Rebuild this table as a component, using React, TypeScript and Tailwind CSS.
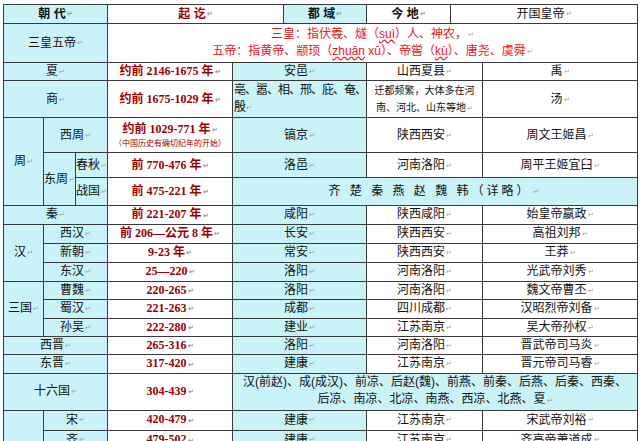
import type { ReactNode, TdHTMLAttributes } from 'react';

// light cyan used by Word for the 朝代 / 都域 columns
const cyan = 'bg-[#c9f3f8]';

// small grey paragraph mark that Word shows after each cell's text
function Mark() {
  return <span className="ml-[1px] align-middle text-[7px] text-[#a0a0a0]">↵</span>;
}

type CellProps = TdHTMLAttributes<HTMLTableCellElement> & {
  children?: ReactNode;
  className?: string;
};

function Cell({ children, className = '', ...rest }: CellProps) {
  return (
    <td
      className={`border border-[#3a3a3a] p-0 text-center align-middle leading-[16px] ${className}`}
      {...rest}
    >
      {children}
    </td>
  );
}

function Years({ children }: { children: ReactNode }) {
  return (
    <span className="font-['Liberation_Serif','Noto_Sans_CJK_SC',serif] font-bold text-[#990000]">
      {children}
      <Mark />
    </span>
  );
}

interface TailProps {
  years: string;
  capital: string;
  place: string;
  founder: string;
}

// the four columns right of 朝代 for an ordinary row
function Tail({ years, capital, place, founder }: TailProps) {
  return (
    <>
      <Cell>
        <Years>{years}</Years>
      </Cell>
      <Cell colSpan={2} className={cyan}>
        {capital}
        <Mark />
      </Cell>
      <Cell colSpan={2}>
        {place}
        <Mark />
      </Cell>
      <Cell>
        {founder}
        <Mark />
      </Cell>
    </>
  );
}

function Label({ children }: { children: ReactNode }) {
  return (
    <>
      {children}
      <Mark />
    </>
  );
}

export default function App() {
  return (
    <div className="min-h-screen bg-white pl-[3px] pt-[4px] font-['Liberation_Sans','Noto_Sans_CJK_SC',sans-serif] text-[12px] text-[#111]">
      <table className="w-[634px] table-fixed border-collapse">
        <colgroup>
          <col className="w-[40px]" />
          <col className="w-[32px]" />
          <col className="w-[32px]" />
          <col className="w-[125px]" />
          <col className="w-[51px]" />
          <col className="w-[83px]" />
          <col className="w-[84px]" />
          <col className="w-[32px]" />
          <col className="w-[155px]" />
        </colgroup>
        <tbody>
          {/* header */}
          <tr className="h-[19px]">
            <Cell colSpan={3} className={`${cyan} font-bold`}>
              <Label>朝 代</Label>
            </Cell>
            <Cell colSpan={2} className="font-bold text-[#990000]">
              <Label>起 讫</Label>
            </Cell>
            <Cell className={`${cyan} font-bold`}>
              <Label>都 域</Label>
            </Cell>
            <Cell className="font-bold">
              <Label>今 地</Label>
            </Cell>
            <Cell colSpan={2}>
              <Label>开国皇帝</Label>
            </Cell>
          </tr>

          <tr className="h-[39px]">
            <Cell colSpan={3} className={cyan}>
              <Label>三皇五帝</Label>
            </Cell>
            <Cell colSpan={6} className="leading-[17px] text-[#e8141b]">
              <div>
                三皇：指伏羲、燧（<span className="underline decoration-wavy decoration-[#e8141b]">suì</span>）人、神农，
                <Mark />
              </div>
              <div>
                五帝：指黄帝、颛顼（
                <span className="underline decoration-wavy decoration-[#e8141b]">zhuān</span> xū）、帝喾（
                <span className="underline decoration-wavy decoration-[#e8141b]">kù</span>）、唐尧、虞舜
                <Mark />
              </div>
            </Cell>
          </tr>

          <tr className="h-[18px]">
            <Cell colSpan={3} className={cyan}>
              <Label>夏</Label>
            </Cell>
            <Tail years="约前 2146-1675 年" capital="安邑" place="山西夏县" founder="禹" />
          </tr>

          <tr className="h-[37px]">
            <Cell colSpan={3} className={cyan}>
              <Label>商</Label>
            </Cell>
            <Cell>
              <Years>约前 1675-1029 年</Years>
            </Cell>
            <Cell colSpan={2} className={`${cyan} whitespace-nowrap pl-[1px] text-left leading-[17px] tracking-[-1px]`}>
              亳、嚣、相、邢、庇、奄、
              <br />
              殷<Mark />
            </Cell>
            <Cell colSpan={2} className="whitespace-nowrap text-[10px] leading-[17px]">
              迁都频繁，大体多在河
              <br />
              南、河北、山东等地<Mark />
            </Cell>
            <Cell>
              <Label>汤</Label>
            </Cell>
          </tr>

          {/* 周 */}
          <tr className="h-[35px]">
            <Cell rowSpan={3} className={cyan}>
              <Label>周</Label>
            </Cell>
            <Cell colSpan={2} className={cyan}>
              <Label>西周</Label>
            </Cell>
            <Cell>
              <div>
                <Years>约前 1029-771 年</Years>
              </div>
              <div className="text-[8px] leading-[12px] text-[#990000]">（中国历史有确切纪年的开始）</div>
            </Cell>
            <Cell colSpan={2} className={cyan}>
              <Label>镐京</Label>
            </Cell>
            <Cell colSpan={2}>
              <Label>陕西西安</Label>
            </Cell>
            <Cell>
              <Label>周文王姬昌</Label>
            </Cell>
          </tr>
          <tr className="h-[25px]">
            <Cell rowSpan={2} className={cyan}>
              <Label>东周</Label>
            </Cell>
            <Cell className={cyan}>
              <Label>春秋</Label>
            </Cell>
            <Tail years="前 770-476 年" capital="洛邑" place="河南洛阳" founder="周平王姬宜臼" />
          </tr>
          <tr className="h-[28px]">
            <Cell className={cyan}>
              <Label>战国</Label>
            </Cell>
            <Cell>
              <Years>前 475-221 年</Years>
            </Cell>
            <Cell colSpan={5} className={`${cyan} tracking-[3px]`}>
              <Label>齐 楚 秦 燕 赵 魏 韩（详略）</Label>
            </Cell>
          </tr>

          <tr className="h-[18px]">
            <Cell colSpan={3} className={cyan}>
              <Label>秦</Label>
            </Cell>
            <Tail years="前 221-207 年" capital="咸阳" place="陕西咸阳" founder="始皇帝嬴政" />
          </tr>

          {/* 汉 */}
          <tr className="h-[19px]">
            <Cell rowSpan={3} className={cyan}>
              <Label>汉</Label>
            </Cell>
            <Cell colSpan={2} className={cyan}>
              <Label>西汉</Label>
            </Cell>
            <Tail years="前 206—公元 8 年" capital="长安" place="陕西西安" founder="高祖刘邦" />
          </tr>
          <tr className="h-[19px]">
            <Cell colSpan={2} className={cyan}>
              <Label>新朝</Label>
            </Cell>
            <Tail years="9-23 年" capital="常安" place="陕西西安" founder="王莽" />
          </tr>
          <tr className="h-[19px]">
            <Cell colSpan={2} className={cyan}>
              <Label>东汉</Label>
            </Cell>
            <Tail years="25—220" capital="洛阳" place="河南洛阳" founder="光武帝刘秀" />
          </tr>

          {/* 三国 */}
          <tr className="h-[18px]">
            <Cell rowSpan={3} className={cyan}>
              <Label>三国</Label>
            </Cell>
            <Cell colSpan={2} className={cyan}>
              <Label>曹魏</Label>
            </Cell>
            <Tail years="220-265" capital="洛阳" place="河南洛阳" founder="魏文帝曹丕" />
          </tr>
          <tr className="h-[19px]">
            <Cell colSpan={2} className={cyan}>
              <Label>蜀汉</Label>
            </Cell>
            <Tail years="221-263" capital="成都" place="四川成都" founder="汉昭烈帝刘备" />
          </tr>
          <tr className="h-[17px]">
            <Cell colSpan={2} className={cyan}>
              <Label>孙吴</Label>
            </Cell>
            <Tail years="222-280" capital="建业" place="江苏南京" founder="吴大帝孙权" />
          </tr>

          <tr className="h-[18px]">
            <Cell colSpan={3} className={cyan}>
              <Label>西晋</Label>
            </Cell>
            <Tail years="265-316" capital="洛阳" place="河南洛阳" founder="晋武帝司马炎" />
          </tr>
          <tr className="h-[18px]">
            <Cell colSpan={3} className={cyan}>
              <Label>东晋</Label>
            </Cell>
            <Tail years="317-420" capital="建康" place="江苏南京" founder="晋元帝司马睿" />
          </tr>
          <tr className="h-[37px]">
            <Cell colSpan={3} className={cyan}>
              <Label>十六国</Label>
            </Cell>
            <Cell>
              <Years>304-439</Years>
            </Cell>
            <Cell colSpan={5} className={`${cyan} leading-[17px]`}>
              <div className="whitespace-nowrap">汉(前赵)、成(成汉)、前凉、后赵(魏)、前燕、前秦、后燕、后秦、西秦、</div>
              <div>
                后凉、南凉、北凉、南燕、西凉、北燕、夏<Mark />
              </div>
            </Cell>
          </tr>

          {/* 南朝: the group label falls below the visible area, so its cell stays blank here */}
          <tr className="h-[20px]">
            <Cell rowSpan={2} className={cyan} />
            <Cell colSpan={2} className={cyan}>
              <Label>宋</Label>
            </Cell>
            <Tail years="420-479" capital="建康" place="江苏南京" founder="宋武帝刘裕" />
          </tr>
          <tr className="h-[20px]">
            <Cell colSpan={2} className={cyan}>
              <Label>齐</Label>
            </Cell>
            <Tail years="479-502" capital="建康" place="江苏南京" founder="齐高帝萧道成" />
          </tr>
        </tbody>
      </table>
    </div>
  );
}
